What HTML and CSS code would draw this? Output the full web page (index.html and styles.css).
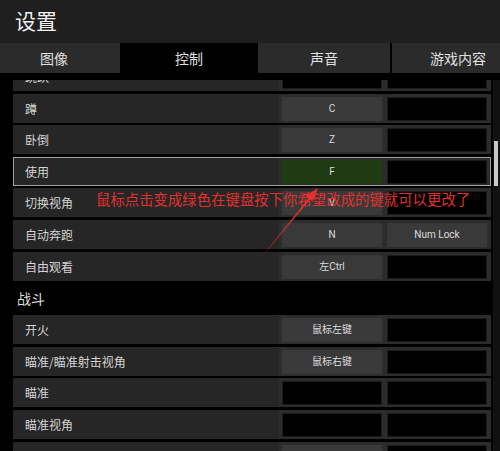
FILE: index.html
```html
<!DOCTYPE html>
<html>
    <head>
        <title>设置</title>
<link rel="stylesheet" href="styles.css">
    </head>

    <body>
        <div id="page">
            <div class="header">设置</div>
            <div class="tabs">
                <div class="tab">图像</div>
                <div class="tab active">控制</div>
                <div class="tab">声音</div>
                <div class="tab">游戏内容</div>
            </div>
            <div class="viewport">
                <div class="list">
                    <div class="row"><div class="label">跳跃</div><div class="keys"><div class="key empty"></div><div class="key empty"></div></div></div>
                    <div class="row"><div class="label">蹲</div><div class="keys"><div class="key">C</div><div class="key empty"></div></div></div>
                    <div class="row"><div class="label">卧倒</div><div class="keys"><div class="key">Z</div><div class="key empty"></div></div></div>
                    <div class="row selected"><div class="label">使用</div><div class="keys"><div class="key green">F</div><div class="key empty"></div></div></div>
                    <div class="row"><div class="label">切换视角</div><div class="keys"><div class="key">V</div><div class="key empty"></div></div></div>
                    <div class="row"><div class="label">自动奔跑</div><div class="keys"><div class="key">N</div><div class="key">Num Lock</div></div></div>
                    <div class="row"><div class="label">自由观看</div><div class="keys"><div class="key">左Ctrl</div><div class="key empty"></div></div></div>
                    <div class="section">战斗</div>
                    <div class="row"><div class="label">开火</div><div class="keys"><div class="key">鼠标左键</div><div class="key empty"></div></div></div>
                    <div class="row"><div class="label">瞄准/瞄准射击视角</div><div class="keys"><div class="key">鼠标右键</div><div class="key empty"></div></div></div>
                    <div class="row"><div class="label">瞄准</div><div class="keys"><div class="key empty"></div><div class="key empty"></div></div></div>
                    <div class="row"><div class="label">瞄准视角</div><div class="keys"><div class="key empty"></div><div class="key empty"></div></div></div>
                    <div class="row"><div class="label">屏息瞄准</div><div class="keys"><div class="key"></div><div class="key empty"></div></div></div>
                </div>
                <div class="scrollbar"><div class="thumb"></div></div>
            </div>

            <!-- annotation drawn over the screenshot -->
            <div class="note">鼠标点击变成绿色在键盘按下你希望改成的键就可以更改了</div>
            <svg class="arrow" width="500" height="451" viewBox="0 0 500 451">
                <polygon points="260,259 308.6,198.2 305.8,195.8 318,188 312.6,201.4 310,199.4" fill="#e8302e"/>
            </svg>
        </div>
    </body>
</html>
```

FILE: styles.css
```css
body {
    margin: 0;
    background-color: #000;
    font-family: "Noto Sans CJK SC", "Noto Sans", sans-serif;
    color: #d8d8d8;
}

#page {
    position: relative;
    width: 500px;
    height: 451px;
    overflow: hidden;
}

.header {
    height: 43px;
    line-height: 40px;
    padding-left: 15px;
    background-color: #1f1f1f;
    font-size: 21px;
    color: #f0f0f0;
}

.tabs {
    display: flex;
    gap: 2px;
    height: 30px;
    margin-left: -12px;
}

.tab {
    flex: 0 0 132px;
    background-color: #2b2b2b;
    font-size: 14px;
    line-height: 30px;
    text-align: center;
    color: #e0e0e0;
}

.tab.active {
    flex-basis: 134px;
    background-color: #000;
}

.viewport {
    display: flex;
    margin-top: 7px;
    height: 371px;
    overflow: hidden;
}

.list {
    width: 478px;
    padding-left: 13px;
    margin-top: -18px;
}

.row {
    display: flex;
    align-items: center;
    height: 29px;
    margin-bottom: 2.6px;
    background-color: #262626;
}

.row.selected {
    outline: 1px solid #a0a0a0;
    outline-offset: -1px;
}

.label {
    flex: 1;
    padding-left: 12px;
    font-size: 12px;
    color: #d4d4d4;
}

.keys {
    display: flex;
    gap: 5px;
    height: 29px;
    box-sizing: border-box;
    padding: 3px 4px 2px 3px;
    background-color: #2c2c2c;
}

.key {
    width: 100px;
    height: 24px;
    box-sizing: border-box;
    background-color: #393939;
    font-family: Roboto, "Noto Sans CJK SC", sans-serif;
    font-size: 10px;
    line-height: 24px;
    text-align: center;
    color: #dcdcdc;
}

.key.empty {
    background-color: #000;
    border: 1px solid #1c1c1c;
}

.key.green {
    background-color: #1f3b13;
}

.section {
    height: 32px;
    line-height: 30px;
    padding-left: 4px;
    font-size: 14px;
    color: #dedede;
}

.scrollbar {
    width: 7px;
    margin-left: 2px;
    background-color: #111;
}

.thumb {
    width: 4px;
    height: 45px;
    margin: 61px 0 0 1px;
    background-color: #c8c8c8;
}

.note {
    position: absolute;
    left: 96px;
    top: 189px;
    font-size: 14.4px;
    line-height: 20px;
    color: #e3302f;
    white-space: nowrap;
}

.arrow {
    position: absolute;
    left: 0;
    top: 0;
}
```
